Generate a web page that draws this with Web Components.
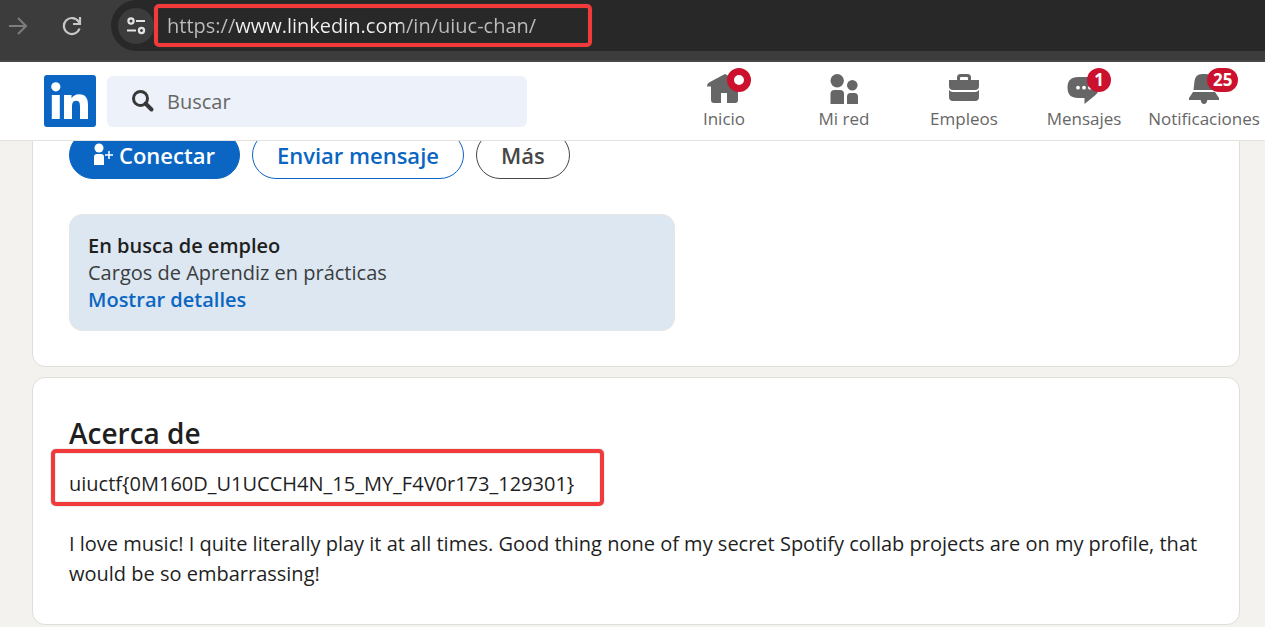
<!DOCTYPE html>
<html lang="es">
<head>
<meta charset="utf-8">
<meta name="viewport" content="width=device-width, initial-scale=1">
<title>uiuc-chan | LinkedIn</title>
<style>
  body { margin: 0; background: #f4f2ee; font-family: "Open Sans", "Noto Sans", sans-serif; font-size: 20px; color: #1f1f1f; }
</style>
</head>
<body>
<browser-bar></browser-bar>
<site-header>
  <nav-item icon="home" badge="dot">Inicio</nav-item>
  <nav-item icon="network">Mi red</nav-item>
  <nav-item icon="jobs">Empleos</nav-item>
  <nav-item icon="messages" badge="1">Mensajes</nav-item>
  <nav-item icon="bell" badge="25">Notificaciones</nav-item>
</site-header>
<profile-page>
  <profile-card class="intro">
    <action-bar>
      <action-button kind="primary" icon>Conectar</action-button>
      <action-button kind="outline">Enviar mensaje</action-button>
      <action-button kind="muted">Más</action-button>
    </action-bar>
    <open-to-work role-text="Cargos de Aprendiz en prácticas"></open-to-work>
  </profile-card>
  <profile-card>
    <about-section heading="Acerca de">
      <mark-box>uiuctf{0M160D_U1UCCH4N_15_MY_F4V0r173_129301}</mark-box>
      <p>I love music! I quite literally play it at all times. Good thing none of my secret Spotify collab projects are on my profile, that would be so embarrassing!</p>
    </about-section>
  </profile-card>
</profile-page>

<script>
const define = (name, render) => customElements.define(name, class extends HTMLElement {
  connectedCallback() {
    if (this.shadowRoot) return;
    const template = document.createElement('template');
    template.innerHTML = render(this);
    this.attachShadow({ mode: 'open' }).append(template.content.cloneNode(true));
  }
});

// Red rounded frame drawn around whatever is slotted in.
define('mark-box', () => `
  <style>
    :host { display: block; position: relative; width: fit-content; }
    :host::after { content: ""; position: absolute; inset: var(--mark-inset, -20px -30px -7px -18px); border: 4px solid #f23a3a; border-radius: 5px; box-shadow: 0 0 1px 0 #555, inset 0 0 1px 0 #555; pointer-events: none; }
  </style>
  <slot></slot>`);

define('browser-bar', () => `
  <style>
    :host { display: flex; align-items: flex-start; height: 60px; background: #3c3c3c; border-bottom: 2px solid #474747; overflow: hidden; }
    button { display: grid; place-items: center; height: 52px; padding: 0; border: 0; background: none; color: #c7c7c7; }
    .forward { width: 36px; color: #7d7d7d; }
    .reload { width: 75px; padding-right: 3px; }
    .address { flex: 1; display: flex; align-items: center; height: 51px; padding-left: 7px; background: #282828; border-radius: 26px 0 0 26px; }
    .site { width: 36px; height: 36px; border-radius: 50%; background: #3c3c3c; color: #e3e3e3; }
    mark-box { --mark-inset: 0; }
    input { box-sizing: border-box; display: block; width: 438px; height: 43px; padding: 0 13px; border: 0; outline: 0; font: 20px "Open Sans", "Noto Sans", sans-serif; color: #e8e8e8;
      -webkit-text-fill-color: transparent; background: linear-gradient(90deg, #bdbdbd 82px, #f2f2f2 82px 248px, #bdbdbd 248px); -webkit-background-clip: text; background-clip: text; }
  </style>
  <button class="forward" aria-label="Adelante"><svg width="20" height="20" viewBox="0 0 20 20" fill="none" stroke="currentColor" stroke-width="2"><path d="M1 10h17M10 2l8 8-8 8"/></svg></button>
  <button class="reload" aria-label="Recargar"><svg width="20" height="20" viewBox="0 0 20 20" fill="none" stroke="currentColor" stroke-width="2.200"><path d="M17.500 12.500A8 8 0 1 1 16.500 5.500L18 7.500M18 1v7H11"/></svg></button>
  <div class="address">
    <button class="site" aria-label="Información del sitio"><svg width="20" height="20" viewBox="0 0 20 20" fill="none" stroke="currentColor" stroke-width="2.200"><circle cx="5" cy="5" r="2.600"/><path d="M10 5h9M1 14.500h9"/><circle cx="15.500" cy="14.500" r="2.600"/></svg></button>
    <mark-box><input type="text" aria-label="Dirección" value="https://www.linkedin.com/in/uiuc-chan/"></mark-box>
  </div>`);

define('site-header', () => `
  <style>
    :host { display: flex; align-items: center; position: relative; z-index: 1; height: 78px; padding: 0 1px 0 44px; background: #fff; border-bottom: 1px solid #e3e2e0; }
    .logo { display: block; width: 52px; height: 52px; margin-right: 11px; }
    label { display: flex; align-items: center; box-sizing: border-box; width: 420px; height: 51px; padding-left: 24px; gap: 12px; background: #edf2fa; border-radius: 6px; }
    svg { display: block; flex: none; }
    input { flex: 1; min-width: 0; border: 0; padding: 0; outline: 0; background: none; font: 20px "Open Sans", "Noto Sans", sans-serif; color: #333; }
    input::placeholder { color: #666; opacity: 1; }
    nav { display: flex; margin-left: auto; }
  </style>
  <a class="logo" href="#" aria-label="LinkedIn"><svg width="52" height="52" viewBox="0 0 52 52"><rect width="52" height="52" rx="3" fill="#0a66c2"/><g fill="#fff"><circle cx="11.800" cy="11.800" r="4.600"/><rect x="7.800" y="20" width="8" height="24"/><path d="M20 20h7.500v3.300c1.300-2.300 4-4 7.500-4 7.200 0 9 4.700 9 11V44h-8V31.500c0-3-.3-5.800-3.800-5.800S28 28.500 28 31.500V44h-8z"/></g></svg></a>
  <label>
    <svg width="24" height="24" viewBox="0 0 24 24" fill="none" stroke="#383838"><circle cx="9.500" cy="9.500" r="7" stroke-width="3"/><path d="M14.500 14.500l6 6" stroke-width="4" stroke-linecap="round"/></svg>
    <input type="search" aria-label="Buscar" placeholder="Buscar">
  </label>
  <nav><slot></slot></nav>`);

const navIcons = {
  home: '<path d="M19 3L3 11.500q-2 1.200-2 4H5V29q0 3 3 3h7V22h6v10h8q3 0 3-3V15.500h4.500q0-2.800-2-4z"/>',
  network: '<circle cx="11.200" cy="9.700" r="6.700"/><path d="M4.500 33V23q0-4 4-4h5.500q4 0 4 4v10z"/><circle cx="26.300" cy="14.200" r="5.300"/><path d="M21 33v-7q0-4 3.500-4H28.500q3.500 0 3.500 4v7z"/>',
  jobs: '<path d="M3 9h8V6.500Q11 3 14.500 3h7Q25 3 25 6.500V9h8v6q0 4-4 4H7q-4 0-4-4zM14 9h8V7q0-1-1-1h-6q-1 0-1 1z"/><path d="M3 19q1.500 2 4 2h22q2.500 0 4-2v7q0 4-4 4H7q-4 0-4-4z"/>',
  messages: '<path d="M12 6h12q9.500 0 9.500 9.500 0 5-4 8.500L18.500 33v-6H12Q1.500 27 1.500 16.500 1.500 6 12 6z"/><g fill="#fff"><circle cx="12" cy="16.700" r="1.900"/><circle cx="18" cy="16.700" r="1.900"/><circle cx="24" cy="16.700" r="1.900"/></g>',
  bell: '<path d="M16 3h4q7 0 8 7l1.200 9H7.500L8.500 10Q9.500 3 16 3z"/><path d="M7 21h22l4 6v2H21.300q-.5 4-3.300 4t-3.300-4H3v-2z"/>'
};

define('nav-item', el => {
  const badge = el.getAttribute('badge');
  return `
  <style>
    :host { display: block; width: 120px; }
    a { display: flex; flex-direction: column; align-items: center; color: #666; text-decoration: none; font-size: 17px; line-height: 24px; white-space: nowrap; }
    .icon { position: relative; }
    svg { display: block; fill: currentColor; }
    .badge { position: absolute; top: -3px; left: 21px; box-sizing: border-box; min-width: 24px; height: 24px; padding: 0 6px; border-radius: 12px; background: #cb112d; color: #fff; font-size: 17px; font-weight: 700; line-height: 24px; text-align: center; }
    .dot { padding: 0; border: 7px solid #cb112d; background: #fff; }
  </style>
  <a href="#">
    <span class="icon"><svg width="36" height="36" viewBox="0 0 36 36">${navIcons[el.getAttribute('icon')]}</svg>
    ${badge ? `<span class="badge ${badge === 'dot' ? 'dot' : ''}">${badge === 'dot' ? '' : badge}</span>` : ''}</span>
    <slot></slot>
  </a>`;
});

define('profile-page', () => `
  <style>
    :host { display: flex; flex-direction: column; gap: 10px; padding: 0 25px 1px 32px; }
    ::slotted(.intro) { margin-top: -46px; }
  </style>
  <slot></slot>`);

define('profile-card', () => `
  <style>
    :host { display: block; padding: 35px 36px; background: #fff; border: 1px solid #dfdedb; border-radius: 13px; }
  </style>
  <slot></slot>`);

define('action-bar', () => `
  <style>:host { display: flex; gap: 12px; margin-bottom: 35px; }</style>
  <slot></slot>`);

define('action-button', el => `
  <style>
    :host { display: block; }
    button { display: flex; align-items: center; gap: 5px; height: 48px; padding: 0 24px; border: 1px solid #474747; border-radius: 24px; background: #fff; color: #474747; font: 600 22px/28px "Open Sans", "Noto Sans", sans-serif; }
    :host([kind="primary"]) button { background: #0a66c2; border-color: #0a66c2; color: #fff; }
    :host([kind="outline"]) button { border-color: #0a66c2; color: #0a66c2; }
  </style>
  <button type="button">${el.hasAttribute('icon') ? '<svg width="20" height="24" viewBox="0 0 20 24" fill="#fff"><circle cx="5" cy="5" r="4.500"/><path d="M0 22v-8q0-3 3-3h4q3 0 3 3v8z"/><path d="M11 12h8M15 8v8" stroke="#fff" stroke-width="1.500"/></svg>' : ''}<slot></slot></button>`);

define('open-to-work', el => `
  <style>
    :host { display: block; box-sizing: border-box; max-width: 606px; padding: 17px 18px; background: #dde7f1; border: 1px solid #e6e6e6; border-radius: 13px; line-height: 27px; }
    h3, p { margin: 0; font-size: 20px; }
    h3, a { font-weight: 600; }
    p { color: #3a3d40; }
    a { display: block; width: fit-content; color: #0a66c2; text-decoration: none; }
  </style>
  <h3>En busca de empleo</h3>
  <p>${el.getAttribute('role-text')}</p>
  <a href="#">Mostrar detalles</a>`);

define('about-section', el => `
  <style>
    :host { display: block; line-height: 30px; }
    h2 { margin: 0 0 16px; font-size: 28px; font-weight: 600; line-height: 40px; }
    ::slotted(p) { margin: 30px 0 0; }
  </style>
  <h2>${el.getAttribute('heading')}</h2>
  <slot></slot>`);
</script>
</body>
</html>
